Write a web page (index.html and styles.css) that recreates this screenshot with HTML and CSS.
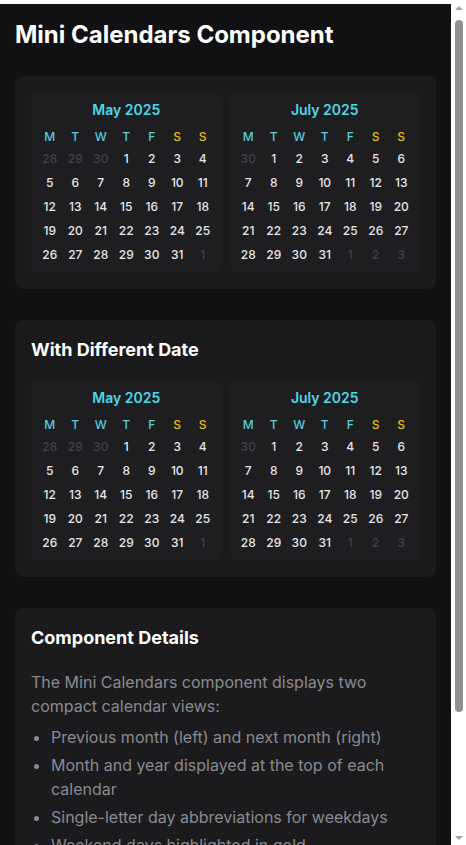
FILE: index.html
```html
<!DOCTYPE html>
<html lang="en">
<head>
<meta charset="utf-8">
<title>Mini Calendars Component</title>
<link rel="stylesheet" href="styles.css">
</head>
<body>
<main class="page">
  <h1 class="page-title">Mini Calendars Component</h1>
  <div class="stack">
    <section class="card">
      <div class="cal-pair">
        <div class="cal">
          <div class="cal-title">May 2025</div>
          <div class="cal-head"><span>M</span><span>T</span><span>W</span><span>T</span><span>F</span><span class="we">S</span><span class="we">S</span></div>
          <div class="cal-grid">
            <span class="out">28</span><span class="out">29</span><span class="out">30</span><span>1</span><span>2</span><span>3</span><span>4</span>
            <span>5</span><span>6</span><span>7</span><span>8</span><span>9</span><span>10</span><span>11</span>
            <span>12</span><span>13</span><span>14</span><span>15</span><span>16</span><span>17</span><span>18</span>
            <span>19</span><span>20</span><span>21</span><span>22</span><span>23</span><span>24</span><span>25</span>
            <span>26</span><span>27</span><span>28</span><span>29</span><span>30</span><span>31</span><span class="out">1</span>
          </div>
        </div>
        <div class="cal">
          <div class="cal-title">July 2025</div>
          <div class="cal-head"><span>M</span><span>T</span><span>W</span><span>T</span><span>F</span><span class="we">S</span><span class="we">S</span></div>
          <div class="cal-grid">
            <span class="out">30</span><span>1</span><span>2</span><span>3</span><span>4</span><span>5</span><span>6</span>
            <span>7</span><span>8</span><span>9</span><span>10</span><span>11</span><span>12</span><span>13</span>
            <span>14</span><span>15</span><span>16</span><span>17</span><span>18</span><span>19</span><span>20</span>
            <span>21</span><span>22</span><span>23</span><span>24</span><span>25</span><span>26</span><span>27</span>
            <span>28</span><span>29</span><span>30</span><span>31</span><span class="out">1</span><span class="out">2</span><span class="out">3</span>
          </div>
        </div>
      </div>
    </section>

    <section class="card">
      <h2 class="card-title">With Different Date</h2>
      <div class="cal-pair">
        <div class="cal">
          <div class="cal-title">May 2025</div>
          <div class="cal-head"><span>M</span><span>T</span><span>W</span><span>T</span><span>F</span><span class="we">S</span><span class="we">S</span></div>
          <div class="cal-grid">
            <span class="out">28</span><span class="out">29</span><span class="out">30</span><span>1</span><span>2</span><span>3</span><span>4</span>
            <span>5</span><span>6</span><span>7</span><span>8</span><span>9</span><span>10</span><span>11</span>
            <span>12</span><span>13</span><span>14</span><span>15</span><span>16</span><span>17</span><span>18</span>
            <span>19</span><span>20</span><span>21</span><span>22</span><span>23</span><span>24</span><span>25</span>
            <span>26</span><span>27</span><span>28</span><span>29</span><span>30</span><span>31</span><span class="out">1</span>
          </div>
        </div>
        <div class="cal">
          <div class="cal-title">July 2025</div>
          <div class="cal-head"><span>M</span><span>T</span><span>W</span><span>T</span><span>F</span><span class="we">S</span><span class="we">S</span></div>
          <div class="cal-grid">
            <span class="out">30</span><span>1</span><span>2</span><span>3</span><span>4</span><span>5</span><span>6</span>
            <span>7</span><span>8</span><span>9</span><span>10</span><span>11</span><span>12</span><span>13</span>
            <span>14</span><span>15</span><span>16</span><span>17</span><span>18</span><span>19</span><span>20</span>
            <span>21</span><span>22</span><span>23</span><span>24</span><span>25</span><span>26</span><span>27</span>
            <span>28</span><span>29</span><span>30</span><span>31</span><span class="out">1</span><span class="out">2</span><span class="out">3</span>
          </div>
        </div>
      </div>
    </section>

    <section class="card">
      <h2 class="card-title details-title">Component Details</h2>
      <p class="details-text">The Mini Calendars component displays two compact calendar views:</p>
      <ul class="details-list">
        <li>Previous month (left) and next month (right)</li>
        <li>Month and year displayed at the top of each calendar</li>
        <li>Single-letter day abbreviations for weekdays</li>
        <li>Weekend days highlighted in gold</li>
        <li>Days from adjacent months shown in muted gray</li>
        <li>Compact grid layout that fits side by side</li>
      </ul>
    </section>
  </div>
</main>
<aside class="scrollbar" aria-hidden="true">
  <span class="sb-arrow sb-up"></span>
  <span class="sb-thumb"></span>
  <span class="sb-arrow sb-down"></span>
</aside>
</body>
</html>
```

FILE: styles.css
```css
html {
  background: #ffffff;
}

body {
  margin: 4px 15px 0 0;
  background: #111113;
  color: #e4e4e7;
  font-family: Inter, "Noto Sans", "Liberation Sans", sans-serif;
  line-height: 1.5;
}

.page {
  padding: 16px 15px 15px;
}

.page-title {
  margin: 0 0 27px;
  font-size: 24px;
  line-height: 29px;
  font-weight: 700;
  color: #ffffff;
}

.stack {
  display: flex;
  flex-direction: column;
  gap: 31px;
}

.card {
  background: #1b1b1e;
  border-radius: 8px;
  padding: 16px 16px 17px;
}

.card-title {
  margin: 0 0 17px;
  font-size: 18px;
  line-height: 27px;
  font-weight: 700;
  color: #ffffff;
}

.cal-pair {
  display: grid;
  grid-template-columns: 1fr 1fr;
  gap: 8px;
}

.cal {
  background: #1e1e21;
  border-radius: 8px;
  padding: 8px 6px 7px;
}

.cal-title {
  text-align: center;
  font-size: 14px;
  line-height: 20px;
  font-weight: 600;
  color: #4fd6ea;
  margin-bottom: 8px;
}

.cal-head,
.cal-grid {
  display: grid;
  grid-template-columns: repeat(7, 1fr);
  text-align: center;
  font-size: 12px;
  font-weight: 500;
}

.cal-head {
  line-height: 18px;
  margin-bottom: 3px;
  color: #5ccbdc;
}

.cal-head .we {
  color: #e2bf12;
}

.cal-grid {
  line-height: 20px;
  row-gap: 4px;
  color: #e6e6e9;
}

.cal-grid .out {
  color: #3e4250;
}

.details-title {
  margin-bottom: 19px;
}

.details-text {
  margin: 0 0 7px;
  font-size: 16px;
  line-height: 24px;
  color: #8a8a8f;
}

.details-list {
  margin: 0 0 8px;
  padding-left: 20px;
  font-size: 16px;
  line-height: 24px;
  color: #8a8a8f;
}

.details-list li {
  margin-bottom: 4px;
}

/* imitation of the browser's classic scrollbar */
.scrollbar {
  position: fixed;
  top: 0;
  right: 0;
  width: 15px;
  height: 100vh;
  background: #ffffff;
  display: flex;
  flex-direction: column;
  align-items: center;
}

.sb-arrow {
  display: block;
  width: 0;
  height: 0;
  border-left: 4px solid transparent;
  border-right: 4px solid transparent;
}

.sb-up {
  margin-top: 6px;
  border-bottom: 4px solid #a3a3a3;
}

.sb-thumb {
  display: block;
  width: 8px;
  height: 692px;
  margin-top: 10px;
  background: #909090;
  border-radius: 4px;
}

.sb-down {
  margin-top: auto;
  margin-bottom: 5px;
  border-top: 4px solid #a3a3a3;
}
```
